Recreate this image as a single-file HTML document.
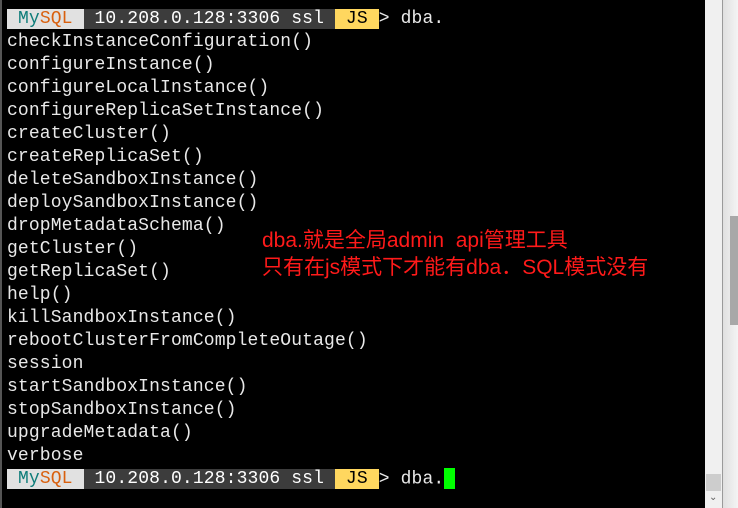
<!DOCTYPE html>
<html><head><meta charset="utf-8"><style>
html,body{margin:0;padding:0;width:738px;height:508px;overflow:hidden;background:#000;}
#term{position:absolute;left:0;top:0;width:705px;height:508px;background:#000;border-left:2px solid #555;box-sizing:border-box;}
.rows{position:absolute;left:5px;top:8px;font-family:"Liberation Mono",monospace;font-size:18px;letter-spacing:0.13px;color:#e8e8e8;}
.r{height:23px;line-height:23px;white-space:pre;}
.m{background:#e1e1e1;} .t{color:#0f7d7a}.o{color:#d9600e}
.d{background:#3c3c3c;color:#fff}
.j{background:#ffd75f;color:#000}
.cur{display:inline-block;width:11px;height:21px;background:#00ff00;vertical-align:middle;}
.red{position:absolute;left:260px;top:227px;color:#ff1a1a;font-family:"Liberation Sans","Noto Sans CJK SC",sans-serif;font-size:21px;line-height:27px;white-space:pre;}
#sb1{position:absolute;left:705px;top:0;width:17px;height:508px;background:#f0f0f0;}
#sb1 .th{position:absolute;left:1px;top:474px;width:15px;height:17px;background:#cdcdcd;}
#sb1 .ar{position:absolute;left:4px;top:492px;font:10px "DejaVu Sans",sans-serif;color:#606060;}
#div{position:absolute;left:722px;top:0;width:1px;height:508px;background:#9a9a9a;}
#sb2{position:absolute;left:723px;top:0;width:15px;height:508px;background:linear-gradient(90deg,#e0e0e0,#f4f4f4);}
#sb2 .th{position:absolute;left:7px;top:216px;width:8px;height:109px;background:#a8a8a8;}
</style></head><body>
<div id="term">
<div class="rows"><div class="r"><span class="m"> <span class="t">My</span><span class="o">SQL</span> </span><span class="d"> 10.208.0.128:3306 ssl </span><span class="j"> JS </span>&gt; dba.</div><div class="r">checkInstanceConfiguration()</div><div class="r">configureInstance()</div><div class="r">configureLocalInstance()</div><div class="r">configureReplicaSetInstance()</div><div class="r">createCluster()</div><div class="r">createReplicaSet()</div><div class="r">deleteSandboxInstance()</div><div class="r">deploySandboxInstance()</div><div class="r">dropMetadataSchema()</div><div class="r">getCluster()</div><div class="r">getReplicaSet()</div><div class="r">help()</div><div class="r">killSandboxInstance()</div><div class="r">rebootClusterFromCompleteOutage()</div><div class="r">session</div><div class="r">startSandboxInstance()</div><div class="r">stopSandboxInstance()</div><div class="r">upgradeMetadata()</div><div class="r">verbose</div><div class="r"><span class="m"> <span class="t">My</span><span class="o">SQL</span> </span><span class="d"> 10.208.0.128:3306 ssl </span><span class="j"> JS </span>&gt; dba.<span class="cur"></span></div></div>
<div class="red">dba.就是全局admin  api管理工具
只有在js模式下才能有dba．SQL模式没有</div>
</div>
<div id="sb1"><div class="th"></div><div class="ar">⌄</div></div>
<div id="div"></div>
<div id="sb2"><div class="th"></div></div>
</body></html>
